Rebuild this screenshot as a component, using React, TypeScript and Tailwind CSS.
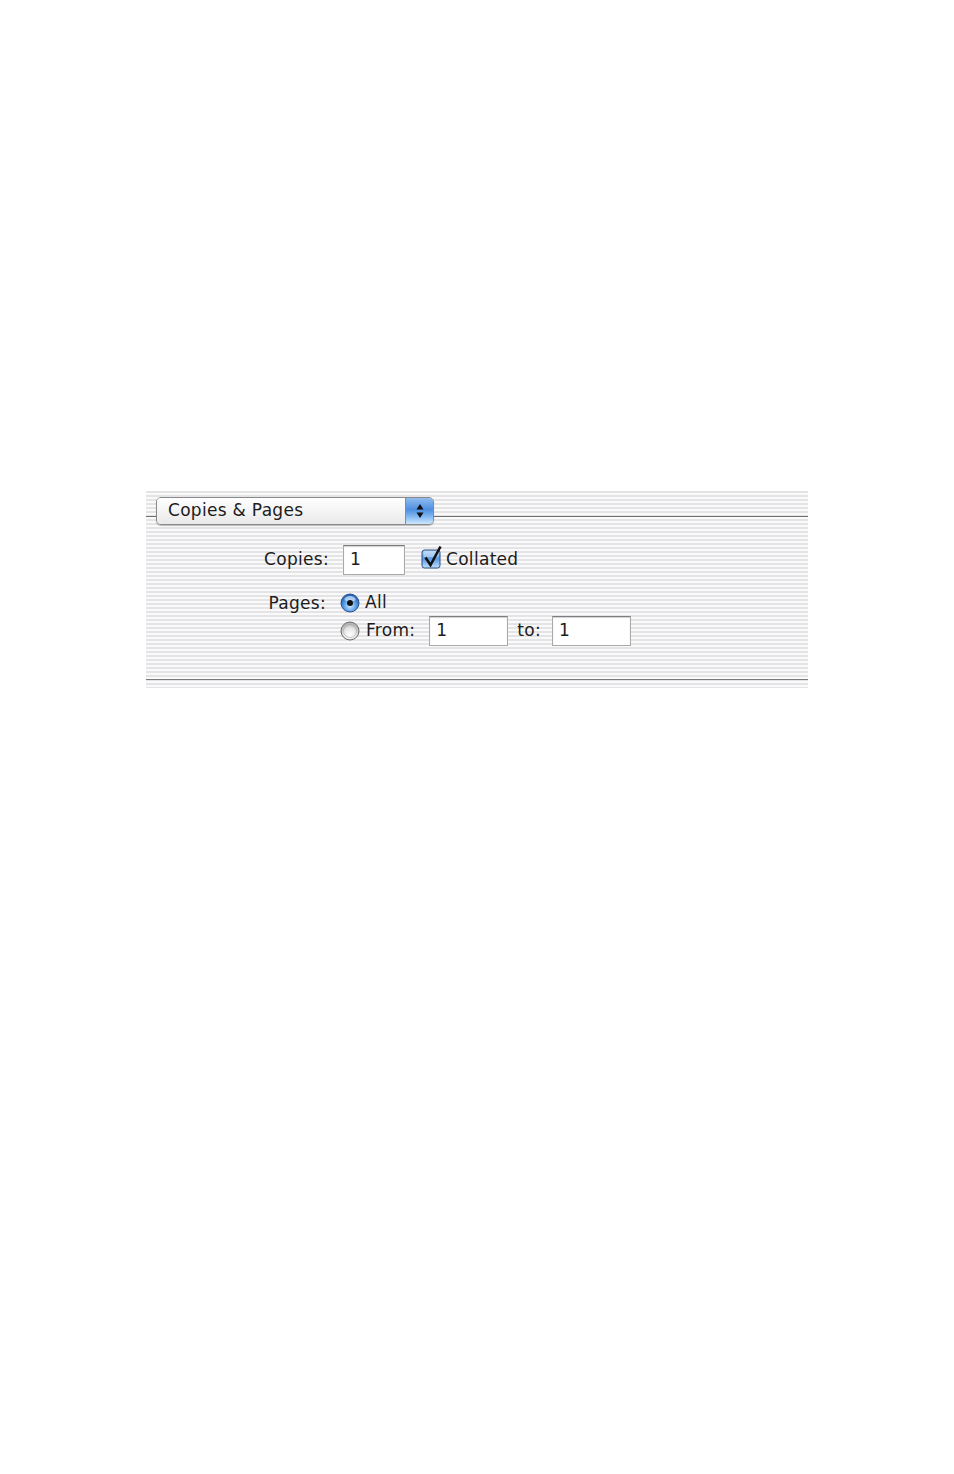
import React from "react";

const font = { fontFamily: '"DejaVu Sans", "Liberation Sans", sans-serif' };

function Field({ w, value }: { w: number; value: string }) {
  return (
    <div
      className="h-[30px] bg-white border border-[#a9a9a9] border-t-[#7d7d7d] shadow-[inset_0_1px_1px_rgba(0,0,0,0.18)] flex items-center pl-[6px] text-[17px] text-[#1c1c1c]"
      style={{ width: w }}
    >
      {value}
    </div>
  );
}

function Radio({ on }: { on: boolean }) {
  return (
    <svg width="20" height="20" viewBox="0 0 20 20" className="shrink-0">
      <defs>
        <radialGradient id="rb" cx="50%" cy="65%" r="60%">
          <stop offset="0%" stopColor="#d6ecff" />
          <stop offset="55%" stopColor="#5aa0ea" />
          <stop offset="100%" stopColor="#1f5fb8" />
        </radialGradient>
        <radialGradient id="rg" cx="50%" cy="70%" r="60%">
          <stop offset="0%" stopColor="#ffffff" />
          <stop offset="60%" stopColor="#e6e6e6" />
          <stop offset="100%" stopColor="#b5b5b5" />
        </radialGradient>
      </defs>
      {on ? (
        <>
          <circle cx="10" cy="10" r="9" fill="url(#rb)" stroke="#2a4f8a" strokeWidth="1" />
          <ellipse cx="10" cy="6" rx="5.5" ry="3" fill="#ffffff" opacity="0.55" />
          <circle cx="10" cy="10" r="3" fill="#111" />
        </>
      ) : (
        <>
          <circle cx="10" cy="10" r="9" fill="url(#rg)" stroke="#6a6a6a" strokeWidth="1" />
          <circle cx="10" cy="10" r="6.5" fill="none" stroke="#9a9a9a" strokeWidth="0.8" opacity="0.6" />
        </>
      )}
    </svg>
  );
}

function Checkbox() {
  return (
    <svg width="22" height="24" viewBox="0 0 22 24" className="shrink-0">
      <defs>
        <linearGradient id="cb" x1="0" y1="0" x2="0" y2="1">
          <stop offset="0%" stopColor="#a9cdf4" />
          <stop offset="50%" stopColor="#5b9be4" />
          <stop offset="100%" stopColor="#bfe0fb" />
        </linearGradient>
      </defs>
      <rect x="1" y="5" width="18" height="18" rx="2.5" fill="url(#cb)" stroke="#2c4f86" strokeWidth="1" />
      <rect x="2.5" y="6" width="15" height="6" rx="2" fill="#ffffff" opacity="0.35" />
      <path d="M4.5 12.5 L9.5 20 L19.5 1.5" fill="none" stroke="#111" strokeWidth="2.6" strokeLinejoin="miter" />
    </svg>
  );
}

export default function App() {
  return (
    <div className="min-h-[1474px] bg-white pt-[491px] pl-[146px] tracking-[0.3px]" style={font}>
      <div className="w-[662px] h-[197px] flex flex-col bg-[repeating-linear-gradient(to_bottom,#e4e4e6_0px,#e4e4e6_2px,#fafafa_2px,#fafafa_4px)]">
        {/* popup row */}
        <div className="flex items-start pt-[6px]">
          <div className="w-[10px] h-px bg-[#6f6f6f] mt-[19px]" />
          <div className="w-[278px] h-[28px] flex rounded-[5px] border border-[#8a8a8a] shadow-[0_1px_1px_rgba(0,0,0,0.25)] overflow-hidden">
            <div className="flex-1 flex items-center pl-[11px] text-[17px] text-[#1c1c1c] bg-[linear-gradient(to_bottom,#ffffff_0%,#f4f4f4_50%,#e9e9e9_100%)]">
              Copies &amp; Pages
            </div>
            <div className="w-[28px] flex items-center justify-center border-l border-[#6f8fbf] bg-[linear-gradient(to_bottom,#8fbbef_0%,#4f8fe0_45%,#7fb6f2_70%,#cfe7fd_100%)]">
              <svg width="10" height="16" viewBox="0 0 10 16">
                <path d="M5 1 L8.5 6.5 L1.5 6.5 Z" fill="#111" />
                <path d="M5 15 L8.5 9.5 L1.5 9.5 Z" fill="#111" />
              </svg>
            </div>
          </div>
          <div className="flex-1 h-px bg-[#6f6f6f] mt-[19px]" />
        </div>

        {/* copies row */}
        <div className="flex items-center mt-[20px] text-[17px] text-[#1c1c1c]">
          <div className="w-[183px] text-right">Copies:</div>
          <div className="ml-[14px]">
            <Field w={62} value="1" />
          </div>
          <div className="ml-[16px] flex items-center">
            <div className="-mt-[6px]">
              <Checkbox />
            </div>
            <span className="ml-[3px]">Collated</span>
          </div>
        </div>

        {/* pages rows */}
        <div className="flex mt-[18px] text-[17px] text-[#1c1c1c]">
          <div className="w-[180px] text-right -mt-[2px]">Pages:</div>
          <div className="ml-[14px] flex flex-col">
            <div className="flex items-center h-[20px]">
              <Radio on />
              <span className="ml-[5px]">All</span>
            </div>
            <div className="flex items-center mt-[3px]">
              <Radio on={false} />
              <span className="ml-[6px]">From:</span>
              <div className="ml-[14px]">
                <Field w={79} value="1" />
              </div>
              <span className="ml-[9px]">to:</span>
              <div className="ml-[11px]">
                <Field w={79} value="1" />
              </div>
            </div>
          </div>
        </div>

        <div className="flex-1" />
        <div className="h-px bg-[#7a7a7a] mb-[8px]" />
      </div>
    </div>
  );
}
